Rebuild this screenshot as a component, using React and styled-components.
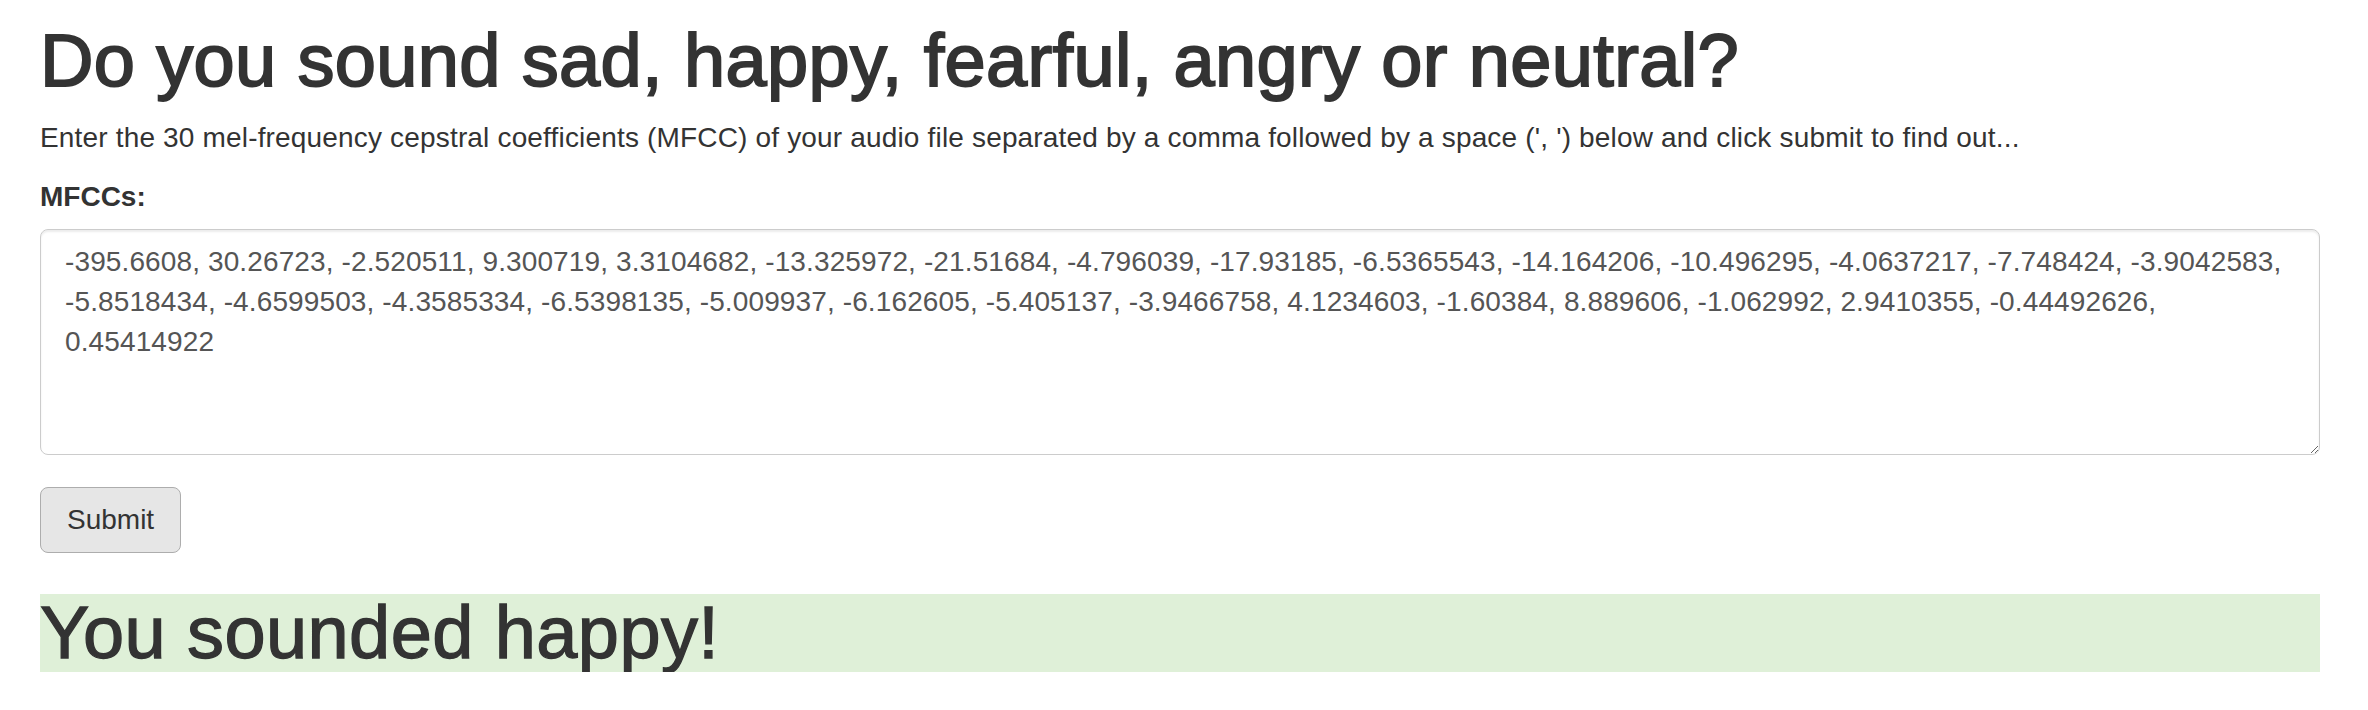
import React from 'react';
import styled, { createGlobalStyle } from 'styled-components';

const GlobalStyle = createGlobalStyle`
    html, body {
        margin: 0;
        padding: 0;
        background: #fff;
    }
    body {
        font-family: "Liberation Sans", Helvetica, Arial, sans-serif;
        color: #333;
    }
`;

const Page = styled.div`
    padding: 22px 48px 0 40px;
`;

// Helvetica Neue Medium in the original, so a thin stroke thickens the regular face
const Title = styled.h1`
    margin: 0 0 18px;
    font-size: 74px;
    line-height: 78px;
    font-weight: 400;
    letter-spacing: 0.35px;
    color: #333;
    -webkit-text-stroke: 1.9px #333;
`;

const Intro = styled.p`
    margin: 0 0 19px;
    font-size: 28px;
    line-height: 40px;
    letter-spacing: 0.17px;
`;

const FormGroup = styled.div`
    display: flex;
    flex-direction: column;
    margin-bottom: 32px;
`;

const Label = styled.label`
    font-size: 28px;
    line-height: 40px;
    font-weight: 700;
    margin-bottom: 12px;
`;

const Field = styled.textarea`
    box-sizing: border-box;
    width: 100%;
    height: 226px;
    padding: 12px 24px;
    font-family: inherit;
    font-size: 28px;
    line-height: 40px;
    letter-spacing: 0.12px;
    color: #555;
    background: #fff;
    border: 1px solid #ccc;
    border-radius: 8px;
    box-shadow: inset 0 2px 2px rgba(0, 0, 0, 0.075);
    outline: none;
    resize: vertical;
`;

const Button = styled.button`
    display: block;
    box-sizing: border-box;
    height: 66px;
    padding: 12px 26px;
    font-family: inherit;
    font-size: 28px;
    line-height: 40px;
    color: #333;
    background: #e6e6e6;
    border: 1px solid #adadad;
    border-radius: 8px;
    cursor: pointer;
`;

const Result = styled.h1`
    margin: 41px 0 0;
    font-size: 74px;
    line-height: 78px;
    font-weight: 400;
    letter-spacing: 0.4px;
    color: #333;
    -webkit-text-stroke: 1.3px #333;
    background: ${(props) => props.tone};
`;

const mfccs = '-395.6608, 30.26723, -2.520511, 9.300719, 3.3104682, -13.325972, -21.51684, -4.796039, -17.93185, -6.5365543, -14.164206, -10.496295, -4.0637217, -7.748424, -3.9042583, -5.8518434, -4.6599503, -4.3585334, -6.5398135, -5.009937, -6.162605, -5.405137, -3.9466758, 4.1234603, -1.60384, 8.889606, -1.062992, 2.9410355, -0.44492626, 0.45414922';

const App = () => {
    return (
        <>
            <GlobalStyle />
            <Page>
                <Title>Do you sound sad, happy, fearful, angry or neutral?</Title>
                <Intro>
                    Enter the 30 mel-frequency cepstral coefficients (MFCC) of your audio file separated by a comma followed by a space (', ') below and click submit to find out...
                </Intro>
                <form onSubmit={(e) => e.preventDefault()}>
                    <FormGroup>
                        <Label htmlFor="mfcc">MFCCs:</Label>
                        <Field id="mfcc" rows={5} defaultValue={mfccs} />
                    </FormGroup>
                    <Button type="submit">Submit</Button>
                </form>
                <Result tone="#dff0d8">You sounded happy!</Result>
            </Page>
        </>
    );
};

export default App;
